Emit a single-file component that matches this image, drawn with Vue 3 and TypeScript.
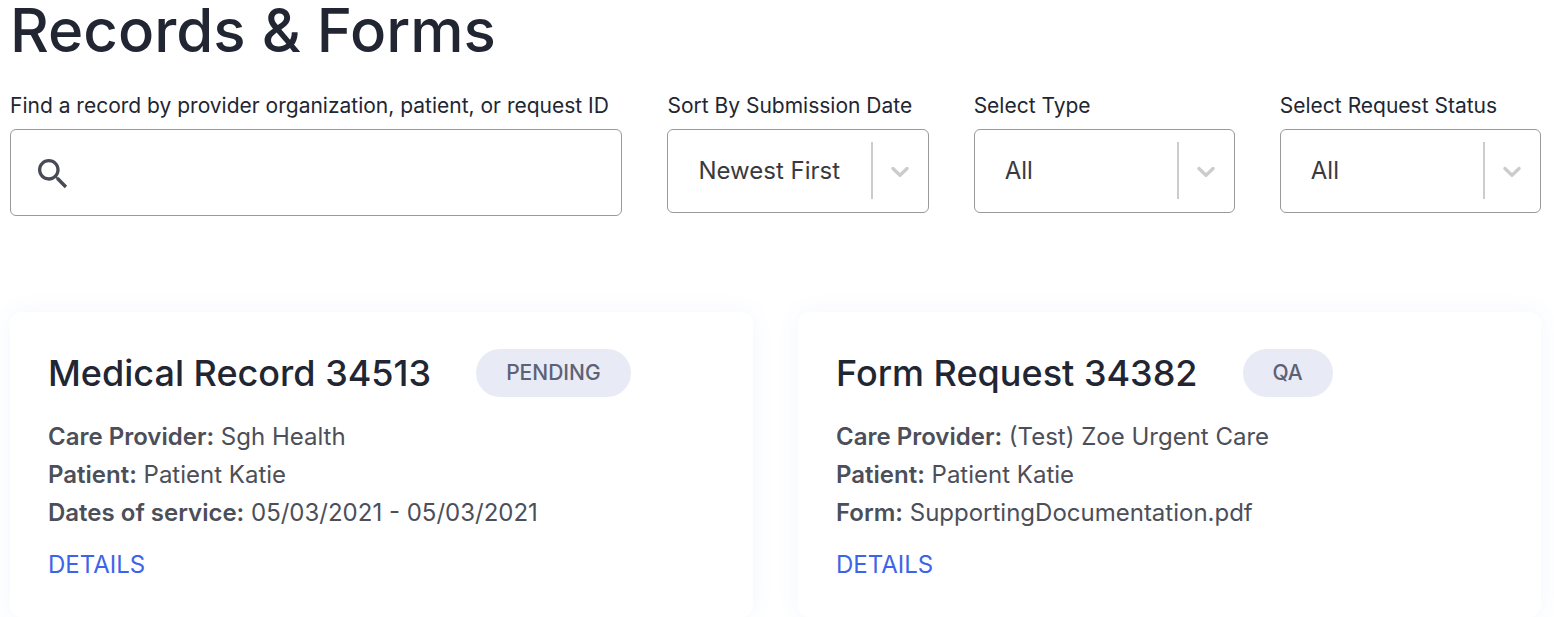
<script setup lang="ts">
interface Filter { id: string; label: string; options: string[] }
interface Row { term: string; value: string }
interface RecordCard { title: string; status: string; rows: Row[] }

const filters: Filter[] = [
  { id: 'sort', label: 'Sort By Submission Date', options: ['Newest First', 'Oldest First'] },
  { id: 'type', label: 'Select Type', options: ['All'] },
  { id: 'status', label: 'Select Request Status', options: ['All'] },
]

const cards: RecordCard[] = [
  {
    title: 'Medical Record 34513',
    status: 'PENDING',
    rows: [
      { term: 'Care Provider:', value: 'Sgh Health' },
      { term: 'Patient:', value: 'Patient Katie' },
      { term: 'Dates of service:', value: '05/03/2021 - 05/03/2021' },
    ],
  },
  {
    title: 'Form Request 34382',
    status: 'QA',
    rows: [
      { term: 'Care Provider:', value: '(Test) Zoe Urgent Care' },
      { term: 'Patient:', value: 'Patient Katie' },
      { term: 'Form:', value: 'SupportingDocumentation.pdf' },
    ],
  },
]
</script>

<template>
  <main class="page">
    <h1>Records &amp; Forms</h1>
    <form class="filters" @submit.prevent>
      <div class="field search">
        <label for="search">Find a record by provider organization, patient, or request ID</label>
        <div class="box search-box">
          <svg class="glass" viewBox="3 3 18 18" aria-hidden="true">
            <path fill="currentColor" d="M15.5 14h-.79l-.28-.27C15.41 12.59 16 11.11 16 9.5 16 5.91 13.09 3 9.5 3S3 5.91 3 9.5 5.91 16 9.5 16c1.61 0 3.09-.59 4.23-1.57l.27.28v.79l5 4.99L20.49 19l-4.99-5zm-6 0C7.01 14 5 11.99 5 9.5S7.01 5 9.5 5 14 7.01 14 9.5 11.99 14 9.5 14z" />
          </svg>
          <input id="search" type="text" />
        </div>
      </div>
      <div v-for="f in filters" :key="f.id" class="field">
        <label :for="f.id">{{ f.label }}</label>
        <div class="box select-box">
          <select :id="f.id">
            <option v-for="o in f.options" :key="o">{{ o }}</option>
          </select>
          <span class="divider"></span>
          <svg class="chevron" viewBox="0 0 20 20" aria-hidden="true">
            <path fill="currentColor" d="M4.516 7.548c0.436-0.446 1.043-0.481 1.576 0l3.908 3.747 3.908-3.747c0.533-0.481 1.141-0.446 1.574 0 0.436 0.445 0.408 1.197 0 1.615-0.406 0.418-4.695 4.502-4.695 4.502-0.217 0.223-0.502 0.335-0.787 0.335s-0.57-0.112-0.789-0.335c0 0-4.287-4.084-4.695-4.502s-0.436-1.17 0-1.615z" />
          </svg>
        </div>
      </div>
    </form>
    <section class="cards">
      <article v-for="c in cards" :key="c.title" class="card">
        <header>
          <h2>{{ c.title }}</h2>
          <span class="badge">{{ c.status }}</span>
        </header>
        <p v-for="r in c.rows" :key="r.term" class="row"><strong>{{ r.term }}</strong> {{ r.value }}</p>
        <a href="#">DETAILS</a>
      </article>
    </section>
  </main>
</template>

<style>
body {
  background: #fff;
}
</style>

<style scoped>
.page {
  padding: 0 13px 0 10px;
  font-family: Inter, "Liberation Sans", sans-serif;
  color: #222633;
}
h1 {
  margin: 0;
  font-size: 60px;
  line-height: 60px;
  font-weight: 500;
}
.filters {
  display: grid;
  grid-template-columns: 612fr 261fr 261fr 261fr;
  column-gap: 45px;
  align-items: start;
  margin-top: 30px;
}
.field {
  min-width: 0;
}
label {
  display: block;
  margin-bottom: 7px;
  font-size: 21px;
  line-height: 32px;
  white-space: nowrap;
}
.box {
  display: flex;
  align-items: center;
  box-sizing: border-box;
  border: 1px solid #999;
  border-radius: 6px;
  background: #fff;
}
.search-box {
  height: 87px;
  padding: 2px 0 0 27px;
}
.glass {
  flex: none;
  width: 30px;
  height: 30px;
  color: #484b55;
}
input {
  flex: 1;
  min-width: 0;
  height: 80px;
  padding: 0 16px;
  border: 0;
  outline: 0;
  background: none;
  font: inherit;
  font-size: 24px;
}
.select-box {
  position: relative;
  height: 84px;
}
select {
  width: 100%;
  height: 82px;
  padding: 0 64px 2px 30px;
  border: 0;
  outline: 0;
  appearance: none;
  background: none;
  color: #3a3a3e;
  font-family: inherit;
  font-size: 24px;
}
.divider {
  position: absolute;
  top: 12px;
  bottom: 13px;
  right: 55px;
  width: 2px;
  background: #ccc;
}
.chevron {
  position: absolute;
  right: 13px;
  top: 26px;
  width: 30px;
  height: 30px;
  color: #ccc;
  pointer-events: none;
}
.cards {
  display: grid;
  grid-template-columns: 1fr 1fr;
  gap: 45px;
  margin-top: 96px;
}
.card {
  padding: 37px 38px 34px;
  border-radius: 12px;
  box-shadow: 0 0 24px rgba(60, 100, 230, 0.06);
}
header {
  display: flex;
  align-items: center;
  gap: 45px;
  margin-bottom: 21px;
}
h2 {
  margin: 0;
  font-size: 36px;
  line-height: 48px;
  font-weight: 500;
}
.badge {
  padding: 0 30px;
  border-radius: 24px;
  background: #e8ebf5;
  color: #5d6176;
  font-size: 21px;
  line-height: 48px;
  font-weight: 500;
}
.row {
  margin: 0;
  color: #4c4f59;
  font-size: 24px;
  line-height: 38px;
}
strong {
  font-weight: 600;
}
a {
  display: block;
  width: fit-content;
  margin-top: 15px;
  color: #3d63ea;
  font-size: 24px;
  line-height: 36px;
  text-decoration: none;
}
</style>
